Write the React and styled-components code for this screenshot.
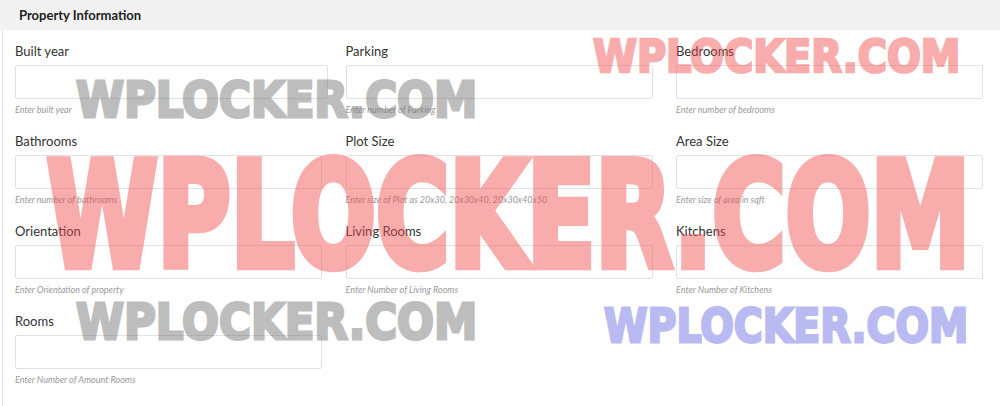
import React from "react";
import styled, { createGlobalStyle } from "styled-components";

const GlobalStyle = createGlobalStyle`
  html, body {
    margin: 0;
    padding: 0;
    background: #fff;
    font-family: Lato, "Open Sans", Arial, sans-serif;
  }
`;

const Page = styled.div`
  position: relative;
  width: 1000px;
  height: 406px;
  overflow: hidden;
  background: #fff;
`;

const Header = styled.div`
  height: 30px;
  background: #f1f1f1;
  display: flex;
  align-items: center;
  padding-left: 19px;

  h3 {
    margin: 0;
    font-size: 13px;
    font-weight: 700;
    color: #222;
  }
`;

const Body = styled.div`
  margin-left: 2px;
  border-left: 1px solid #e4e4e4;
  height: 376px;
  box-sizing: border-box;
  padding: 12px 0 0 12px;
`;

const Grid = styled.div`
  display: grid;
  grid-template-columns: repeat(3, 307px);
  column-gap: 23.5px;
  row-gap: 16px;
`;

const Field = styled.div`
  display: flex;
  flex-direction: column;
`;

const Label = styled.label`
  font-size: 13px;
  line-height: 18px;
  color: #333;
  margin-bottom: 5px;
`;

const Input = styled.input`
  box-sizing: border-box;
  height: 34px;
  width: ${(p) => (p.$wide ? "313px" : "100%")};
  border: 1px solid #e2e2e2;
  border-radius: 2px;
  background: #fff;
  outline: none;
  padding: 0 10px;
  font-family: inherit;
  font-size: 13px;
`;

const Help = styled.span`
  margin-top: 5px;
  font-size: 9px;
  line-height: 12px;
  font-style: italic;
  color: #9a9a9a;
`;

// watermark overlays lying over the form
const Watermark = styled.div`
  position: absolute;
  left: ${(p) => p.$x}px;
  top: ${(p) => p.$y}px;
  font-family: "DejaVu Sans", sans-serif;
  font-weight: 700;
  font-size: ${(p) => p.$size}px;
  line-height: 1;
  white-space: nowrap;
  color: ${(p) => p.$color};
  -webkit-text-stroke: ${(p) => p.$size * 0.06}px ${(p) => p.$color};
  opacity: 0.45;
  transform: scaleX(${(p) => p.$sx});
  transform-origin: left top;
  pointer-events: none;
`;

const fields = [
  { label: "Built year", help: "Enter built year", wide: true },
  { label: "Parking", help: "Enter number of Parking" },
  { label: "Bedrooms", help: "Enter number of bedrooms" },
  { label: "Bathrooms", help: "Enter number of bathrooms" },
  { label: "Plot Size", help: "Enter size of Plot as 20x30, 20x30x40, 20x30x40x50" },
  { label: "Area Size", help: "Enter size of area in sqft" },
  { label: "Orientation", help: "Enter Orientation of property" },
  { label: "Living Rooms", help: "Enter Number of Living Rooms" },
  { label: "Kitchens", help: "Enter Number of Kitchens" },
  { label: "Rooms", help: "Enter Number of Amount Rooms" },
];

const marks = [
  { x: 76, y: 75, size: 50, sx: 0.87, color: "#6e6e6e" },
  { x: 593, y: 34, size: 45, sx: 0.885, color: "#f24a4a" },
  { x: 47, y: 143, size: 145, sx: 0.69, color: "#f24a4a" },
  { x: 76, y: 297, size: 50, sx: 0.87, color: "#6e6e6e" },
  { x: 604, y: 302, size: 47, sx: 0.84, color: "#6868e6" },
];

const App = () => {
  return (
    <Page>
      <GlobalStyle />
      <Header>
        <h3>Property Information</h3>
      </Header>
      <Body>
        <Grid>
          {fields.map((f) => (
            <Field key={f.label}>
              <Label>{f.label}</Label>
              <Input type="text" $wide={f.wide} />
              <Help>{f.help}</Help>
            </Field>
          ))}
        </Grid>
      </Body>
      {marks.map((m, i) => (
        <Watermark
          key={`mark_${i}`}
          $x={m.x}
          $y={m.y}
          $size={m.size}
          $sx={m.sx}
          $color={m.color}
        >
          WPLOCKER.COM
        </Watermark>
      ))}
    </Page>
  );
};

export default App;
